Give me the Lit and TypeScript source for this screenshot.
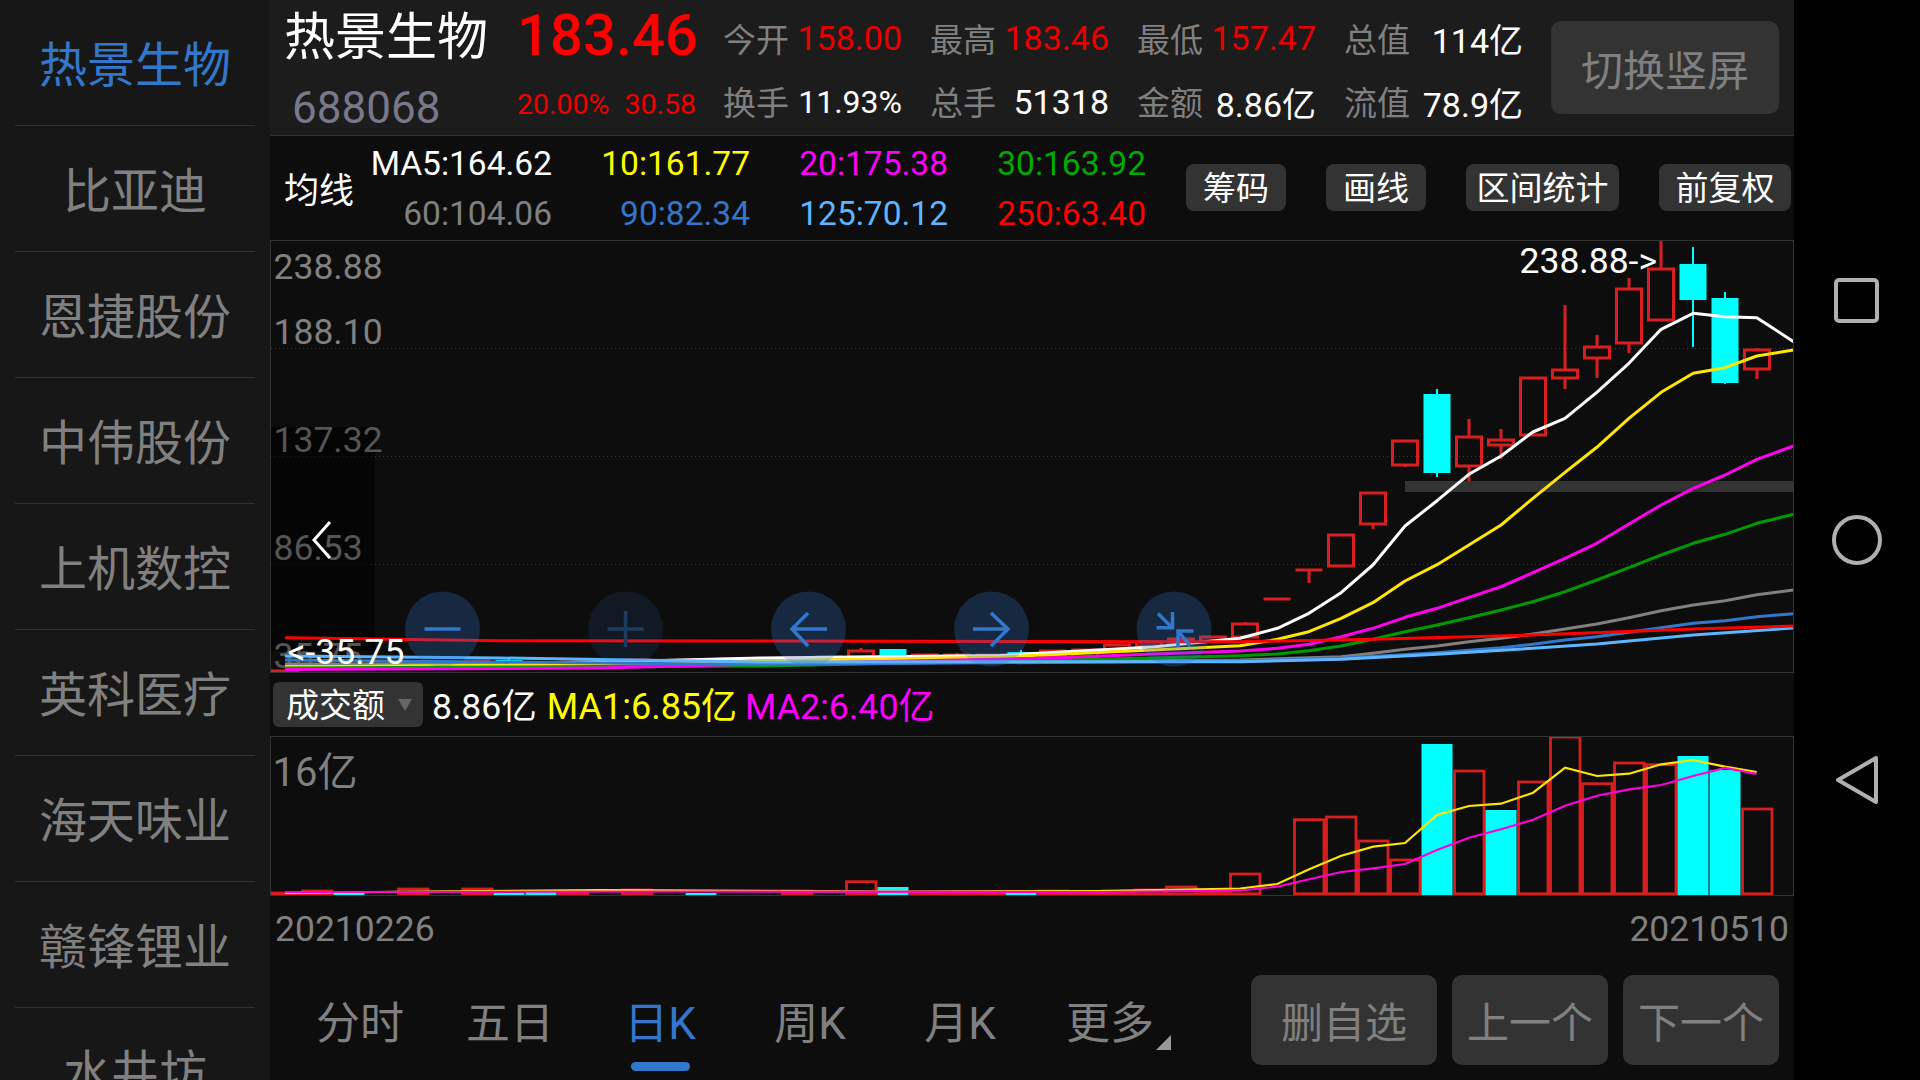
import { LitElement, html, css, svg } from "lit";
import { customElement } from "lit/decorators.js";

type P = [number, number];
const z3 = (pts: P[]): P[] => pts.map(([x, y]) => [1240 + x / 2.8, 230 + y / 3] as P);
const z6 = (pts: P[]): P[] => pts.map(([x, y]) => [1260 + x / 2.904, 730 + y / 3] as P);
const pl = (pts: P[]) => pts.map(([x, y]) => `${x.toFixed(1)},${y.toFixed(1)}`).join(" ");

const MA: { c: string; pts: P[] }[] = [
  { c: "#ffffff", pts: [[285, 666], [420, 665], [600, 662], [760, 658], [1000, 655.5], [1153, 647], ...z3([[0, 1225], [105, 1195], [193, 1150], [283, 1088], [372, 1005], [462, 888], [552, 812], [641, 733], [731, 678], [820, 606], [910, 565], [999, 487], [1089, 400], [1179, 298], [1269, 250], [1358, 260], [1447, 263], [1550, 335]])] },
  { c: "#808080", pts: [[285, 664], [760, 664], ...z3([[0, 1290], [283, 1280], [372, 1270], [462, 1258], [552, 1248], [641, 1235], [731, 1225], [820, 1212], [910, 1197], [999, 1182], [1089, 1163], [1179, 1142], [1269, 1125], [1358, 1112], [1447, 1094], [1550, 1080]])] },
  { c: "#ffe600", pts: [[285, 667], [500, 665], [760, 661], [1000, 657], [1153, 650], ...z3([[0, 1247], [105, 1228], [193, 1205], [283, 1165], [372, 1118], [462, 1053], [552, 1004], [641, 945], [731, 885], [820, 805], [910, 727], [999, 652], [1089, 565], [1179, 487], [1269, 430], [1358, 413], [1447, 378], [1550, 360]])] },
  { c: "#009900", pts: [[285, 668], [760, 666], [1153, 658], ...z3([[0, 1277], [105, 1272], [193, 1262], [283, 1248], [372, 1228], [462, 1205], [552, 1185], [641, 1163], [731, 1140], [820, 1115], [910, 1085], [999, 1050], [1089, 1013], [1179, 975], [1269, 940], [1358, 913], [1447, 880], [1550, 853]])] },
  { c: "#ff00ee", pts: [[285, 669.5], [600, 668], [760, 664], [1050, 658], [1153, 654], ...z3([[0, 1263], [105, 1255], [193, 1243], [283, 1220], [372, 1195], [462, 1162], [552, 1135], [641, 1102], [731, 1070], [820, 1028], [910, 985], [999, 940], [1089, 882], [1179, 825], [1269, 775], [1358, 735], [1447, 688], [1550, 648]])] },
  { c: "#3377cc", pts: [[285, 660], [760, 664.5], ...z3([[0, 1293], [283, 1285], [552, 1268], [731, 1253], [820, 1243], [910, 1230], [999, 1220], [1089, 1207], [1179, 1193], [1269, 1180], [1358, 1172], [1447, 1160], [1550, 1151]])] },
  { c: "#5cb6ff", pts: [[285, 656], [500, 658], [760, 662], ...z3([[0, 1295], [283, 1288], [552, 1273], [820, 1255], [999, 1242], [1269, 1215], [1550, 1194]])] },
  { c: "#ff0000", pts: [[285, 637.7], [500, 640.7], ...z3([[0, 1235], [372, 1228], [820, 1215], [1269, 1197], [1550, 1188]])] },
];

// cx, body top, body bottom, wick top, wick bottom, falling
type Candle = [number, number, number, number, number, boolean?];
const CANDLES: Candle[] = [
  [317, 664, 666, 664, 666], [349, 664, 665.5, 664, 666, true], [381, 663, 666, 663, 666], [413, 663, 666, 663, 666],
  [445, 662, 665, 662, 665], [477, 660, 662, 658, 662], [509, 660, 662, 659, 662, true], [541, 661, 663, 661, 663, true],
  [573, 661, 663, 661, 663], [605, 660, 662, 660, 662], [637, 659, 662, 659, 662], [669, 660, 662, 660, 662],
  [701, 659, 662, 659, 662], [733, 658, 661, 658, 661], [765, 658, 660, 658, 660], [797, 656.5, 658.5, 656.5, 658.5],
  [829, 656, 658, 656, 658], [861, 650, 657, 648, 657], [893, 649, 657, 649, 657, true], [925, 654, 657, 654, 657],
  [957, 654, 657, 653, 657], [989, 654, 656, 654, 656], [1021, 652, 657, 650, 657, true], [1053, 650, 657, 650, 657],
  [1085, 649, 657, 649, 657], [1117, 644, 650, 644, 650], [1149, 641, 646, 641, 646], [1181, 638, 642, 638, 642],
  [1213, 636, 641, 636, 641], [1245, 623, 637, 622, 637],
  [1277, 598, 600, 598, 600], [1309, 569, 571, 569, 583],
  [1341, 534, 566, 534, 566], [1373, 492, 524, 492, 529], [1405, 440, 465, 440, 467],
  [1437, 394, 473, 389, 477, true], [1469, 436, 466, 419, 481], [1501, 439, 445, 429, 459],
  [1533, 377, 435, 377, 435], [1565, 369, 378, 305, 389], [1597, 346, 358, 335, 378],
  [1629, 288, 343, 278, 353], [1661, 268, 320, 240, 321], [1693, 264, 300, 247, 347, true],
  [1725, 298, 383, 292, 384, true], [1757, 349, 369, 348, 379],
];

// cx, top, falling
type Bar = [number, number, boolean?];
const BARS: Bar[] = [
  [285, 892], [317, 890], [349, 893, true], [381, 893], [413, 888], [445, 893], [477, 888], [509, 892.7, true],
  [541, 892, true], [573, 892], [605, 893], [637, 889], [669, 893], [701, 893, true], [733, 893], [765, 893],
  [797, 890], [829, 893], [861, 880.7], [893, 887, true], [925, 892], [957, 891], [989, 892], [1021, 892, true],
  [1053, 890], [1085, 891], [1117, 890], [1149, 889], [1181, 886], [1213, 890], [1245, 873], [1277, 893],
  [1309, 818.7], [1341, 816], [1373, 840], [1405, 859], [1437, 744, true], [1469, 770], [1501, 810, true],
  [1533, 781], [1565, 736], [1597, 782.7], [1629, 762], [1661, 763.7], [1693, 756, true], [1725, 770, true], [1757, 808],
];

const VOL_Y = z6([[50, 462], [143, 418], [236, 377], [329, 350], [421, 339], [514, 255], [607, 228], [700, 221], [793, 188], [886, 113], [979, 138], [1072, 131], [1165, 103], [1258, 90], [1350, 110], [1442, 126]]);
const VOL_M = z6([[50, 470], [143, 448], [236, 426], [329, 415], [421, 402], [514, 360], [607, 323], [700, 298], [793, 269], [886, 227], [979, 197], [1072, 178], [1165, 165], [1258, 138], [1350, 114], [1442, 132]]);

const STOCKS = ["热景生物", "比亚迪", "恩捷股份", "中伟股份", "上机数控", "英科医疗", "海天味业", "赣锋锂业", "水井坊"];
const STATS: [string, string, string][] = [
  ["今开", "158.00", "red"], ["最高", "183.46", "red"], ["最低", "157.47", "red"], ["总值", "114亿", "white"],
  ["换手", "11.93%", "white pct"], ["总手", "51318", "white"], ["金额", "8.86亿", "white"], ["流值", "78.9亿", "white"],
];
const AVGS: [string, string][] = [
  ["MA5:164.62", "c-white"], ["10:161.77", "c-yellow"], ["20:175.38", "c-magenta"], ["30:163.92", "c-green"],
  ["60:104.06", "c-gray"], ["90:82.34", "c-blue"], ["125:70.12", "c-sky"], ["250:63.40", "c-red"],
];
const TOOLS = [["筹码", 100], ["画线", 100], ["区间统计", 153], ["前复权", 132]] as [string, number][];
const TABS = ["分时", "五日", "日K", "周K", "月K", "更多"];
const ACTIONS = [["删自选", 186], ["上一个", 156], ["下一个", 156]] as [string, number][];

@customElement("app-root")
export class AppRoot extends LitElement {
  static styles = css`
    :host { display: block; width: 1920px; height: 1080px; overflow: hidden; background: #000; font-family: Roboto, "Noto Sans CJK SC", sans-serif; }
    .screen { display: flex; width: 1920px; height: 1080px; overflow: hidden; }
    .side { width: 270px; flex: none; background: #171717; height: 1080px; overflow: hidden; }
    .stock { height: 125px; display: flex; align-items: center; justify-content: center; font-size: 48px; padding-bottom: 3px; box-sizing: border-box; color: #808080; margin: 0 15px 1px; }
    .rule { height: 1px; margin: -1px 15px 0; background: #333; }
    .stock.on { color: #3377cc; }
    .main { width: 1524px; flex: none; background: #0d0d0d; display: flex; flex-direction: column; height: 1080px; }
    .header { height: 135px; flex: none; background: #1c1c1c; border-bottom: 1px solid #333; display: flex; box-sizing: content-box; }
    .id { width: 233px; margin-left: 14px; flex: none; }
    .name { height: 74px; line-height: 76px; font-size: 51px; color: #fff; white-space: nowrap; }
    .code { height: 61px; line-height: 68px; font-size: 44px; color: #78788a; padding-left: 8px; }
    .quote { width: 179px; flex: none; }
    .price { height: 74px; line-height: 71px; font-size: 58px; font-weight: 500; color: #f00; white-space: nowrap; }
    .change { height: 61px; line-height: 61px; font-size: 28.5px; color: #e00; display: flex; justify-content: space-between; }
    .stats { margin-left: 27px; display: grid; grid-template-columns: repeat(4, 179px); grid-template-rows: 74px 61px; column-gap: 28px; flex: none; }
    .stat { display: flex; justify-content: space-between; align-items: center; font-size: 34px; box-sizing: border-box; padding-top: 2px; }
    .stat:nth-child(n + 5) { padding-top: 0; padding-bottom: 5px; }
    .stat .k { font-size: 33px; color: #808080; }
    .stat:nth-child(n + 5) .k { padding-bottom: 2px; }
    .stat .v.red { color: #e80000; }
    .stat .v.white { color: #fff; }
    .stat .v.pct { font-size: 32px; }
    .swap { margin: 21px 0 0 28px; width: 228px; height: 93px; background: #333; border-radius: 10px; color: #808080; font-size: 42px; display: flex; align-items: center; justify-content: center; flex: none; }
    .avgs { height: 104px; flex: none; display: flex; align-items: center; }
    .avg-title { width: 70px; margin-left: 14px; font-size: 35px; color: #fff; flex: none; padding-bottom: 2px; }
    .avg-grid { display: grid; grid-template-columns: repeat(4, 198px); grid-auto-rows: 49.5px; flex: none; padding-top: 1px; }
    .avg-grid span { font-size: 33.5px; line-height: 49.5px; text-align: right; white-space: nowrap; }
    .c-white { color: #fff; } .c-yellow { color: #ff0; } .c-magenta { color: #f0f; } .c-green { color: #0a0; }
    .c-gray { color: #808080; } .c-blue { color: #3377cc; } .c-sky { color: #5cb6ff; } .c-red { color: #f00; }
    .tools { display: flex; gap: 40px; margin: -2px 0 0 40px; }
    .tool { height: 47px; background: #333; border-radius: 8px; color: #fff; font-size: 33px; display: flex; align-items: center; justify-content: center; padding-bottom: 3px; box-sizing: border-box; }
    .chart { display: block; flex: none; }
    .vhead { height: 63px; flex: none; display: flex; align-items: center; font-size: 36px; gap: 10px; padding-left: 3px; box-sizing: border-box; }
    .vhead > span { padding-bottom: 3px; }
    .vhead > .first { font-size: 35.5px; }
    .vhead > .c-magenta { margin-left: -2px; font-size: 35.8px; }
    .drop { width: 150px; height: 45px; background: #333; border-radius: 6px; color: #fff; font-size: 33px; display: flex; align-items: center; padding: 0 0 3px 13px; box-sizing: border-box; gap: 13px; margin-right: -1px; }
    .caret { width: 0; height: 0; border-left: 7px solid transparent; border-right: 7px solid transparent; border-top: 12px solid #666; margin-top: 3px; }
    .dates { height: 64px; flex: none; display: flex; align-items: center; justify-content: space-between; font-size: 35.5px; color: #808080; padding: 2px 5px 0; box-sizing: border-box; }
    .bottom { flex: 1; display: flex; padding: 0 15px; }
    .tabs { display: flex; }
    .tab { position: relative; width: 150px; display: flex; flex-direction: column; align-items: center; padding-top: 38px; box-sizing: border-box; font-size: 44px; color: #808080; }
    .tab span { height: 52px; line-height: 52px; }
    .tab.on { color: #3377cc; }
    .bar { width: 59px; height: 9px; border-radius: 5px; background: #3377cc; margin-top: 12px; }
    .corner { position: absolute; left: 121px; top: 75px; width: 15px; height: 15px; background: #999; clip-path: polygon(100% 0, 100% 100%, 0 100%); }
    .actions { margin-left: auto; display: flex; gap: 15px; padding-top: 15px; }
    .act { height: 90px; background: #333; border-radius: 10px; color: #808080; font-size: 42px; display: flex; align-items: center; justify-content: center; padding-bottom: 2px; box-sizing: border-box; }
    .nav { flex: 1; display: flex; flex-direction: column; align-items: center; padding-top: 278px; box-sizing: border-box; }
    .nav svg { display: block; }
    .ax { font-size: 35.5px; fill: #808080; font-family: Roboto, "Noto Sans CJK SC", sans-serif; }
    .ax.dim { fill: #555; }
    .ax.hi { fill: #fff; }
    .ax.big { font-size: 40px; }
  `;

  private mainChart() {
    const red = "#d81e1e";
    return html`<svg class="chart" width="1524" height="433" viewBox="270 240 1524 433">
      ${[348, 456, 564].map((y) => svg`<line x1="271" x2="1793" y1=${y + 0.5} y2=${y + 0.5} stroke="#3a3a3a" stroke-dasharray="1 3"/>`)}
      <rect x="1405" y="481" width="388" height="11" fill="#333"/>
      <text class="ax" x="273.5" y="278.5">238.88</text>
      <text class="ax" x="273.5" y="343.5">188.10</text>
      <rect x="271" y="427" width="104" height="224" fill="#000" opacity="0.55"/>
      <text class="ax dim" x="273.5" y="452">137.32</text>
      <text class="ax dim" x="273.5" y="560">86.53</text>
      <text class="ax dim" x="273.5" y="668">35.75</text>
      <line x1="271" x2="299" y1="671" y2="671" stroke=${red} stroke-width="3"/>
      ${CANDLES.map(([cx, t, b, wt, wb, fall]) => fall
        ? svg`<line x1=${cx} x2=${cx} y1=${wt} y2=${wb} stroke="#0ff" stroke-width="2"/><rect x=${cx - 13.5} y=${t} width="27" height=${b - t} fill="#0ff"/>`
        : b - t <= 2
          ? svg`<line x1=${cx} x2=${cx} y1=${t} y2=${wb} stroke=${red} stroke-width="3"/><line x1=${cx - 13.5} x2=${cx + 13.5} y1=${t + 1} y2=${t + 1} stroke=${red} stroke-width="3"/>`
          : svg`<line x1=${cx} x2=${cx} y1=${wt} y2=${t} stroke=${red} stroke-width="3"/><line x1=${cx} x2=${cx} y1=${b} y2=${wb} stroke=${red} stroke-width="3"/><rect x=${cx - 12.5} y=${t + 1} width="25" height=${b - t - 1} fill="none" stroke=${red} stroke-width="3"/>`)}
      ${MA.map((m) => svg`<polyline points=${pl(m.pts)} fill="none" stroke=${m.c} stroke-width="3" stroke-linejoin="round"/>`)}
      <text class="ax hi" x="1519.5" y="273">238.88-&gt;</text>
      <text class="ax hi" x="287.5" y="664">&lt;-35.75</text>
      <polyline points="330,522 314,540 330,558" fill="none" stroke="#fff" stroke-width="3"/>
      <circle cx="442.5" cy="629" r="37.5" fill="#3377cc" fill-opacity="0.27"/>
      <line x1="424.5" x2="460.5" y1="629" y2="629" stroke="#3377cc" stroke-width="3.5"/>
      <circle cx="625.5" cy="629" r="37.5" fill="#3377cc" fill-opacity="0.12"/>
      <path d="M607.5 629H643.5M625.5 611V647" fill="none" stroke="#1f3c60" stroke-width="3.5"/>
      <circle cx="808.5" cy="629" r="37.5" fill="#3377cc" fill-opacity="0.27"/>
      <path d="M827 629H792M808 613L792 629L808 646" fill="none" stroke="#3377cc" stroke-width="3.5"/>
      <circle cx="991.5" cy="629" r="37.5" fill="#3377cc" fill-opacity="0.27"/>
      <path d="M973 629H1008M991 613L1008 629L991 646" fill="none" stroke="#3377cc" stroke-width="3.5"/>
      <circle cx="1174" cy="629" r="37.5" fill="#3377cc" fill-opacity="0.27"/>
      <path d="M1172.5 612V627.7H1156.5M1158 613.5L1171 626.5M1178 647V631H1193.5M1190.5 646L1179 632.5" fill="none" stroke="#3377cc" stroke-width="3.5"/>
      <rect x="270.5" y="240.5" width="1523" height="432" fill="none" stroke="#333"/>
    </svg>`;
  }

  private volChart() {
    const red = "#d81e1e";
    const baseY = 893.8;
    return html`<svg class="chart" width="1524" height="160" viewBox="270 736 1524 160">
      <text class="ax big" x="272.5" y="786">16亿</text>
      ${BARS.map(([cx, t, fall]) => fall
        ? svg`<rect x=${cx - 15.5} y=${t} width="31" height=${895 - t} fill="#0ff"/>`
        : svg`<rect x=${cx - 14.5} y=${t + 1} width="29.5" height=${baseY - t - 1} fill="none" stroke=${red} stroke-width="2.8"/>`)}
      <polyline points=${pl([[285, 893], [420, 891.5], [600, 890], [900, 891.5], [1100, 891], [1240, 888.5], ...VOL_Y])} fill="none" stroke="#ffe600" stroke-width="2.2"/>
      <polyline points=${pl([[285, 892], [700, 891.5], [1100, 892], [1240, 890.5], ...VOL_M])} fill="none" stroke="#ff00dd" stroke-width="2.2"/>
      <rect x="270.5" y="736.5" width="1523" height="159" fill="none" stroke="#333"/>
    </svg>`;
  }

  render() {
    return html`<div class="screen">
      <aside class="side">
        ${STOCKS.map((s, i) => html`<div class="stock ${i === 0 ? "on" : ""}">${s}</div><div class="rule"></div>`)}
      </aside>
      <main class="main">
        <section class="header">
          <div class="id"><div class="name">热景生物</div><div class="code">688068</div></div>
          <div class="quote">
            <div class="price">183.46</div>
            <div class="change"><span>20.00%</span><span>30.58</span></div>
          </div>
          <div class="stats">
            ${STATS.map(([k, v, c]) => html`<div class="stat"><span class="k">${k}</span><span class="v ${c}">${v}</span></div>`)}
          </div>
          <div class="swap">切换竖屏</div>
        </section>
        <section class="avgs">
          <div class="avg-title">均线</div>
          <div class="avg-grid">${AVGS.map(([t, c]) => html`<span class=${c}>${t}</span>`)}</div>
          <div class="tools">${TOOLS.map(([t, w]) => html`<div class="tool" style="width:${w}px">${t}</div>`)}</div>
        </section>
        ${this.mainChart()}
        <section class="vhead">
          <div class="drop"><span>成交额</span><i class="caret"></i></div>
          <span class="c-white first">8.86亿</span><span class="c-yellow">MA1:6.85亿</span><span class="c-magenta">MA2:6.40亿</span>
        </section>
        ${this.volChart()}
        <section class="dates"><span>20210226</span><span>20210510</span></section>
        <section class="bottom">
          <div class="tabs">
            ${TABS.map((t, i) => html`<div class="tab ${i === 2 ? "on" : ""}"><span>${t}</span>${i === 2 ? html`<div class="bar"></div>` : ""}${i === 5 ? html`<i class="corner"></i>` : ""}</div>`)}
          </div>
          <div class="actions">${ACTIONS.map(([t, w]) => html`<div class="act" style="width:${w}px">${t}</div>`)}</div>
        </section>
      </main>
      <nav class="nav">
        <svg width="50" height="540" viewBox="0 0 50 540">
          <rect x="4" y="2" width="41" height="41" rx="3" fill="none" stroke="#b0b0b0" stroke-width="4"/>
          <circle cx="25" cy="262" r="23" fill="none" stroke="#b0b0b0" stroke-width="4"/>
          <path d="M44 480L6 502L44 524Z" fill="none" stroke="#b0b0b0" stroke-width="4" stroke-linejoin="round"/>
        </svg>
      </nav>
    </div>`;
  }
}
